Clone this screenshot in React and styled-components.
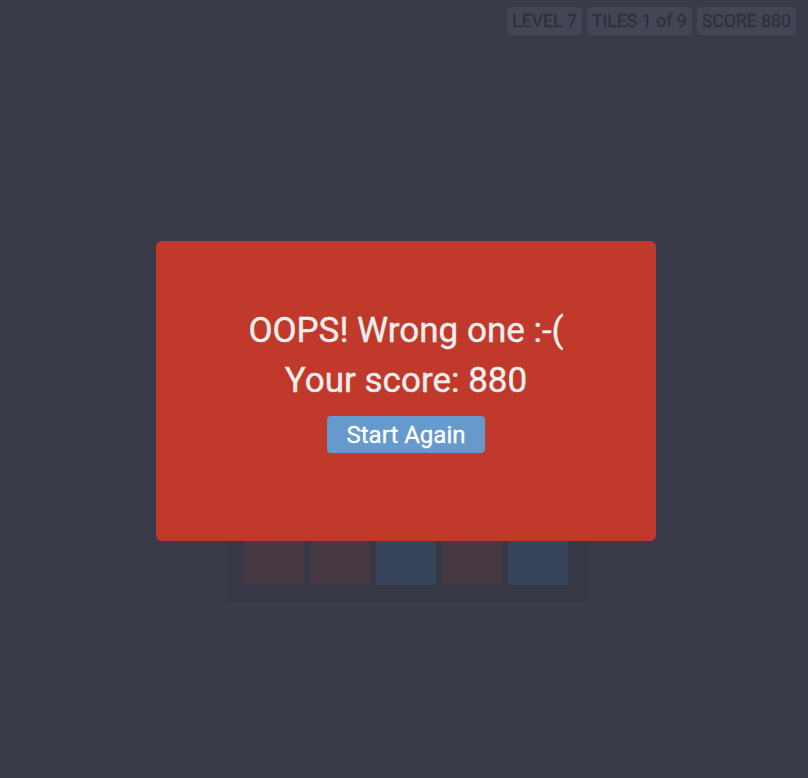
import React from 'react';
import styled, { createGlobalStyle } from 'styled-components';

const GlobalStyle = createGlobalStyle`
  html, body {
    margin: 0;
    padding: 0;
    background: #393b48;
  }
  body {
    font-family: Roboto, "Liberation Sans", sans-serif;
  }
`

const Page = styled.div`
  position: relative;
  width: 808px;
  height: 778px;
  overflow: hidden;
  background: #393b48;
  display: flex;
  flex-direction: column;
`

const Hud = styled.div`
  display: flex;
  justify-content: flex-end;
  gap: 5px;
  padding: 7px 12px 0 0;
`

const Badge = styled.div`
  background: #444655;
  color: #2e303b;
  font-size: 17.7px;
  line-height: 20px;
  padding: 4px 5px;
  border-radius: 3px;
  -webkit-text-stroke: 0.3px #2e303b;
`

const Board = styled.div`
  margin: 208px 0 0 226px;
  width: 324px;
  padding: 18px;
  background: #363846;
  display: grid;
  grid-template-columns: repeat(5, 60px);
  grid-auto-rows: 60px;
  gap: 6px;
`

const Tile = styled.div`
  background: ${p => (p.$hit ? '#37445a' : '#473a45')};
`

const Modal = styled.div`
  position: absolute;
  left: 156px;
  top: 241px;
  width: 500px;
  height: 300px;
  box-sizing: border-box;
  padding-top: 65px;
  background: #c0392b;
  border-radius: 6px;
  display: flex;
  flex-direction: column;
  align-items: center;
  color: #eeeeee;
`

const Line = styled.div`
  font-size: 35px;
  line-height: 50px;
  -webkit-text-stroke: 0.4px #eeeeee;
`

const Button = styled.button`
  margin-top: 10px;
  height: 37px;
  padding: 0 20px;
  border: none;
  border-radius: 4px;
  background: #6699cc;
  color: #ffffff;
  font-family: Roboto, "Liberation Sans", sans-serif;
  font-size: 24px;
  -webkit-text-stroke: 0.3px #ffffff;
  cursor: pointer;
`

const pattern = [
  0, 1, 0, 1, 0,
  1, 0, 0, 1, 1,
  0, 1, 1, 0, 0,
  1, 0, 1, 0, 1,
  0, 0, 1, 0, 1,
]

export default function App() {
  return (
    <Page>
      <GlobalStyle />
      <Hud>
        <Badge>LEVEL 7</Badge>
        <Badge>TILES 1 of 9</Badge>
        <Badge>SCORE 880</Badge>
      </Hud>
      <Board>
        {pattern.map((v, i) => <Tile key={i} $hit={v === 1} />)}
      </Board>
      <Modal>
        <Line>OOPS! Wrong one :-(</Line>
        <Line>Your score: 880</Line>
        <Button>Start Again</Button>
      </Modal>
    </Page>
  )
}
